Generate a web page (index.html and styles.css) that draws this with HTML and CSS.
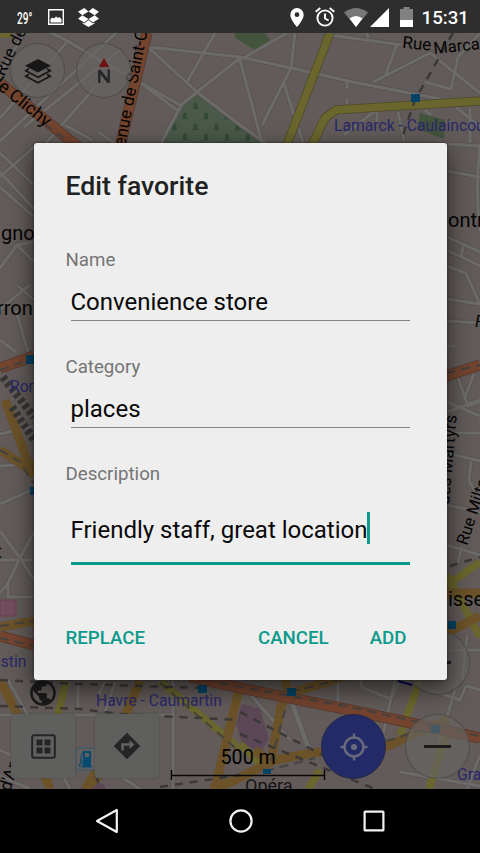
FILE: index.html
```html
<!DOCTYPE html>
<html lang="en">
<head>
<meta charset="utf-8">
<title>Edit favorite</title>
<link rel="stylesheet" href="styles.css">
</head>
<body>
<header class="status">
  <span class="temp">29°</span>
  <svg class="s-image" width="16" height="16" viewBox="0 0 16 16"><path d="M.7.7h14.6v14.6H.7z" fill="none" stroke="#fff" stroke-width="1.4"/><path d="M2.500 13.500v-3l1.500-2 2 1 2-2 2 1.500 1.500-1 2 2.500v3z" fill="#fff"/></svg>
  <svg class="s-drop" width="21" height="19" viewBox="0 0 21 19"><path d="M6.200 0 10.500 3.500 4.300 7.300 0 3.800zM14.800 0 21 3.800 16.700 7.300 10.500 3.500zM4.300 7.300 10.500 11 6.200 14.600 0 10.800zM16.700 7.300 21 10.800 14.800 14.600 10.500 11zM10.500 12 14.800 15.400 16.500 14.400V15.600L10.500 19 4.500 15.600V14.400L6.200 15.400z" fill="#fff"/></svg>
  <span class="spacer"></span>
  <svg class="s-pin" width="14" height="19" viewBox="0 0 14 19"><path fill="#fff" fill-rule="evenodd" d="M7 0a6.700 6.700 0 0 0-6.700 6.700C.3 11.500 7 19 7 19s6.700-7.500 6.700-12.300A6.700 6.700 0 0 0 7 0zm0 4.300a2.400 2.400 0 1 1 0 4.800 2.400 2.400 0 0 1 0-4.800z"/></svg>
  <svg class="s-alarm" width="20" height="20" viewBox="0 0 20 20" fill="none" stroke="#fff" stroke-width="1.900"><circle cx="10" cy="11" r="7.600"/><path d="M10 6.500v5l3.600 2M.7 4.800 5.300 1M19.300 4.800 14.700 1"/></svg>
  <svg class="s-wifi" width="24" height="19" viewBox="0 0 24 19"><path d="M0 4.500Q12-4.500 24 4.500L12 19z" fill="#777"/><path d="M5.500 10.500Q12 5.500 18.500 10.500L12 19z" fill="#fff"/></svg>
  <svg class="s-cell" width="19" height="19" viewBox="0 0 19 19"><path d="M19 0v19H0z" fill="#fff"/></svg>
  <svg class="s-bat" width="13" height="20" viewBox="0 0 13 20"><path d="M3.500 0h6v2H13v11H0V2h3.500z" fill="#818181"/><path d="M0 13h13v7H0z" fill="#fff"/></svg>
  <time class="clock">15:31</time>
</header>

<main class="screen">
  <svg class="map" viewBox="0 33 480 756" width="480" height="756">
    <defs>
      <pattern id="graves" width="21" height="21" patternUnits="userSpaceOnUse" x="185" y="102">
        <path d="M8.500 6V2.500a2 2 0 0 1 4 0V6h1v1.200h-6V6zM-2 16v-3.500a2 2 0 0 1 4 0V16h1v1.200h-6V16zM19 16v-3.500a2 2 0 0 1 4 0V16h1v1.200h-6V16z" fill="#344a37"/>
      </pattern>
      <g id="minor">
        <path d="M0 141 116 33M0 74 24 33M50 33 68 41 112 68 133 77 178 111M68 41 0 118M53 33 180 105M24 127 120 50M65 125 92 140M98 132 140 160M112 68 46 143M148 47 197 92 240 125 290 160M148 47 240 57M181 105 197 92 240 58M187 82 215 33M161 143 182 104 197 92M240 57 291 68 353 82 440 99M240 60 287 33M240 60 262 143M291 68 295 33M291 68 262 125M284 84 303 143M330 35 402 45M397 44 386 74M373 82 430 53M366 33 369 38M347 80v9M347 98v8M344 135 376 110M377 112v10M398 112 404 140M430 53 480 93M458 57 451 89 425 82M480 33 458 57M425 110 431 115M470 108v35M456 107l24 20"/>
        <path d="M0 153 34 185M0 172 34 209M34 242 17 245 0 268M0 187 34 217M17 245 34 262M0 309 30 285M17 285 34 300M16 310 28 352M0 340 16 352M34 147 0 177M0 504 34 489M0 531 20 558 34 580M0 593 8 583 8 597 34 597M8 583 20 558 34 532M0 560H34M0 466 34 464M0 434 34 426"/>
        <path d="M447 144 480 146M447 171 480 177M447 237 480 252M447 250 480 266M461 257 464 243M447 266 466 273 480 305M447 299 480 304M447 321 480 323M447 346h8M458 378l10 28 12-5M474 374l-10 25M480 144q-5 48 0 87M447 402 480 416M447 412 480 400M447 433h33M447 453l33 8M471 461l-2 20 11 19M447 505 480 512M447 545 480 555M457 565l5-18M447 650h33M467 635l-5 45"/>
        <path d="M8 680 70 789M173 681V789M105 681 98 696M115 682 105 712M338 680v23M361 680v7l30 12 9-19M395 680 383 735M290 700 312 760M293 703 310 750M250 694 290 740M400 772 480 786M430 690 460 700 466 686 480 690M458 680 440 740 430 789M480 755 467 789M0 750 28 763M0 776 30 789M80 750 140 789M0 715H173M78 681v30"/>
      </g>
    </defs>
    <rect y="33" width="480" height="756" fill="#625b59"/>
    <path d="M235 33h30l6 8-16 9-20-12zM420 113l25 7-1 19-27-10z" fill="#43543d"/>
    <path d="M197 93 240 125 270 147H160l23-42z" fill="#4a5949"/>
    <path d="M197 93 240 125 270 147H160l23-42z" fill="url(#graves)"/>
    <path d="M0 600h16v16H0z" fill="#704e5c" stroke="#713c58"/>
    <path d="M242 704l18 5 9 30-9 14-18-10-6-20zM86 781l18 3 2 5H80z" fill="#5c4757"/>
    <use href="#minor" class="minor-edge"/>
    <use href="#minor" class="minor"/>

    <path class="edge" d="M330 33 286 147M311 147l14-29 11-8 30-2 114-7"/>
    <path class="yellow" d="M330 33 286 147M311 147l14-29 11-8 30-2 114-7"/>
    <path class="yellow" d="M0 34h12M446 586l34-24M447 575l33 62M420 680l-20 55M447 730l-18 59M66 681l-8 34M160 681l80 68M320 770l-12 19M240 744l20 20"/>
    <path class="amber" d="M447 593h33M447 633 480 616M0 450l26 17 8 8M5 400l22 60 7 12M0 627l34-6M0 680l30 60 20 49M140 681l-30 70-25 38M85 789l30-28M285 680l3 12-7 14-8 45-2 10 40-8 77-7 60-27M285 695 350 675M254 750l17 12-40 20-20 7M239 690l-24 98"/>
    <path class="edge orange-edge" d="M0 83 78 147M147 33 120 147M0 368 34 356M446 376l34-11M0 636l34 9M190 677 240 688 355 711 480 738"/>
    <path class="orange" d="M0 83 78 147M147 33 120 147M0 368 34 356M446 376l34-11M0 636l34 9M190 677 240 688 355 711 480 738"/>
    <path class="rail" d="M45 124 75 147M0 370 34 358M447 373l33-8M0 626l34-5M0 638l34 8M0 450l20 12 14 22M220 683 355 708 480 736M290 692 350 677M386 741 430 728M285 710l-14 51M265 771l50-13M160 683l80 69"/>
    <path class="railway" d="M0 706 80 709 120 714 240 720M0 680 80 684 205 688M160 787 240 775M240 712 330 759M240 734 375 789M453 33 415 100 402 138M450 566l30-9M96 775l4 14"/>
    <path d="M3 377 34 417M12 407 34 440" class="tracks"/>
    <path d="M398 681l14 4" stroke="#05055b" stroke-width="2"/>
    <path d="M411 94h9v8h-9zM26 355h9v9h-9zM30 487h9v8h-9zM198 685h9v8h-9zM287 688h9v8h-9zM448 621h8v8h-8zM263 769h8v5h-8zM431 725h9v8h-9z" fill="#064466"/>

    <g class="street">
      <text transform="translate(4 77) rotate(-64)" font-size="17">Rue de</text>
      <text transform="translate(-11 82) rotate(39)" font-size="18">de Clichy</text>
      <text transform="translate(125 147) rotate(-79)" font-size="17">enue de Saint-O</text>
      <text transform="translate(402 48) rotate(5)" font-size="17">Rue</text>
      <text transform="translate(434 54) rotate(-6)" font-size="16.500">Marcadet</text>
      <text transform="translate(449 505) rotate(-85)" font-size="17">des Martyrs</text>
      <text transform="translate(467 546) rotate(-72)" font-size="16.500">Rue Milton</text>
      <text transform="translate(10 792) rotate(-72)" font-size="17">d'Ams</text>
      <text x="475" y="327" font-size="17" font-style="italic">R</text>
      <text x="1" y="240" font-size="20">gnolles</text>
      <text x="-3" y="315" font-size="20">rron</text>
      <text x="448" y="227" font-size="20">ontmartre</text>
      <text x="448" y="606" font-size="20">issement</text>
      <text x="-4" y="558" font-size="18">t</text>
      <text x="245" y="792" font-size="18" fill="#151515">Opéra</text>
    </g>
    <g class="metro" font-size="15.700">
      <text x="334" y="131">Lamarck - Caulaincourt</text>
      <text x="10" y="392">Rome</text>
      <text x="-8" y="667">ustin</text>
      <text x="96" y="706">Havre - Caumartin</text>
      <text x="457" y="780">Grands</text>
    </g>
    <rect x="76" y="748" width="20" height="22" rx="3" fill="#625f5e" stroke="#365b70"/>
    <path d="M83 751h8v15h1v1.500h-10V766h1zM85 753v4h4v-4z" fill="#064b70" fill-rule="evenodd"/>
    <path d="M83 752q-2 3-2 7t-2 7q2 2 3-1v-5" fill="none" stroke="#064b70"/>
    <text x="220.500" y="764" font-size="19.700">500 m</text>
    <path d="M171.500 770v10M324.500 770v10M171 775.500h154" fill="none" stroke="#080808" stroke-width="1.500"/>
  </svg>

  <div class="controls top">
    <div class="round small"><svg width="28" height="28" viewBox="0 0 28 28"><path d="M14 2 27 8.700 14 15.500 1 8.700z" fill="#171717"/><path d="M5 11.800 1.800 13.800 14 20.300 26.200 13.800 23 11.800M5 17.300 1.800 19.300 14 25.700 26.200 19.300 23 17.300" fill="none" stroke="#171717" stroke-width="1.700"/></svg></div>
    <div class="round small compass"><svg width="16" height="26" viewBox="0 0 16 26"><path d="M8 0 13.300 9H2.700z" fill="#701313"/><path d="M3.300 25V12.300L12.700 23.500M12.700 11.500V24.500L3.300 13" fill="none" stroke="#272727" stroke-width="2.400" stroke-linejoin="bevel"/></svg></div>
  </div>
  <div class="round zoom-in"><i class="bar"></i></div>
  <svg class="globe" width="28" height="28" viewBox="0 0 24 24"><path fill="#1b1b1b" d="M12 1C5.900 1 1 5.900 1 12s4.900 11 11 11 11-4.900 11-11S18.100 1 12 1zm-1.100 19.700c-4.300-.5-7.700-4.200-7.700-8.700 0-.7.100-1.300.2-2l5.300 5.300v1.100c0 1.200 1 2.200 2.200 2.200v2.100zm7.600-2.800c-.3-.9-1.100-1.500-2.100-1.500h-1.100v-3.300c0-.6-.5-1.100-1.100-1.100H7.600V9.800h2.200c.6 0 1.100-.5 1.100-1.100V6.500h2.200c1.200 0 2.200-1 2.200-2.200v-.5c3.200 1.300 5.500 4.500 5.500 8.200 0 2.300-.9 4.400-2.300 5.900z"/></svg>
  <div class="controls bottom">
    <div class="tile"><svg width="25" height="25" viewBox="0 0 25 25"><rect x="1.200" y="1.200" width="22.600" height="22.600" rx="2" fill="none" stroke="#242424" stroke-width="2"/><path d="M5.500 5.500h6v6h-6zM13.500 5.500h6v6h-6zM5.500 13.500h6v6h-6zM13.500 13.500h6v6h-6z" fill="#242424"/></svg></div>
    <div class="tile"><svg width="28" height="28" viewBox="0 0 28 28"><path d="M14 .8 27.200 14 14 27.200.8 14z" fill="#242424"/><path d="M9.500 18.500v-6h8" fill="none" stroke="#626262" stroke-width="2.600"/><path d="M16.500 8 21.500 12.500 16.500 17z" fill="#626262"/></svg></div>
    <span class="spacer"></span>
    <div class="round locate"><svg width="28" height="28" viewBox="0 0 28 28" fill="none" stroke="#696b7c" stroke-width="2.400"><circle cx="14" cy="14" r="9.500"/><circle cx="14" cy="14" r="3" fill="#696b7c" stroke="none"/><path d="M14 .5v5M14 22.500v5M.5 14h5M22.500 14h5"/></svg></div>
    <div class="round zoom-out"><i class="bar"></i></div>
  </div>

  <section class="dialog">
    <h1>Edit favorite</h1>
    <label>Name</label>
    <div class="field">Convenience store</div>
    <label>Category</label>
    <div class="field">places</div>
    <label>Description</label>
    <div class="field active">Friendly staff, great location<i class="caret"></i></div>
    <div class="actions">
      <button>REPLACE</button>
      <span class="spacer"></span>
      <button class="cancel">CANCEL</button>
      <button>ADD</button>
    </div>
  </section>
</main>

<nav class="nav">
  <svg width="24" height="26" viewBox="0 0 24 26"><path d="M21.800 2v22L2 13z" fill="none" stroke="#f2f2f2" stroke-width="2.200" stroke-linejoin="round"/></svg>
  <svg width="24" height="24" viewBox="0 0 24 24"><circle cx="12" cy="12" r="10.600" fill="none" stroke="#f2f2f2" stroke-width="2.200"/></svg>
  <svg width="22" height="22" viewBox="0 0 22 22"><rect x="1.600" y="1.600" width="18.800" height="18.800" rx=".5" fill="none" stroke="#f2f2f2" stroke-width="2.200"/></svg>
</nav>
</body>
</html>
```
FILE: styles.css
```css
* { box-sizing: border-box; }

body {
  margin: 0;
  width: 480px;
  height: 853px;
  display: flex;
  flex-direction: column;
  overflow: hidden;
  background: #000;
  font-family: Roboto, "Liberation Sans", sans-serif;
}

svg { display: block; flex: none; }
.spacer { flex: 1; }

/* Status bar */
.status {
  height: 33px;
  flex: none;
  display: flex;
  align-items: center;
  padding: 1px 11px 0 17px;
  background: #2e2e2e;
  color: #fff;
}
.temp {
  width: 31px;
  padding-top: 2px;
  font-size: 16px;
  font-weight: 500;
  white-space: nowrap;
  transform: scaleX(.63);
  transform-origin: left;
}
.s-drop { margin-left: 14px; }
.s-alarm { margin-left: 11px; }
.s-wifi { margin-left: 9px; }
.s-cell { margin-left: 2px; }
.s-bat { margin-left: 11px; }
.clock { margin-left: 9px; padding-top: 2px; font-size: 18.7px; font-weight: 500; line-height: 20px; }

/* Map */
.screen {
  position: relative;
  height: 756px;
  flex: none;
  display: flex;
  justify-content: center;
  align-items: flex-start;
  overflow: hidden;
}
.map { position: absolute; inset: 0; }
.map path { stroke-linejoin: round; }
.minor-edge { fill: none; stroke: #575351; stroke-width: 4.4; }
.minor { fill: none; stroke: #6d6b6a; stroke-width: 3; }
.edge { fill: none; stroke: #4d4925; stroke-width: 9; }
.yellow { fill: none; stroke: #6a662d; stroke-width: 7.5; }
.amber { fill: none; stroke: #6b5228; stroke-width: 9; }
.edge.orange-edge { stroke: #56382c; stroke-width: 11; }
.orange { fill: none; stroke: #74442f; stroke-width: 9.5; }
.rail { fill: none; stroke: #454340; stroke-width: 2; stroke-dasharray: 9 6; }
.railway { fill: none; stroke: #3b3938; stroke-width: 2.5; stroke-dasharray: 8 7; }
.tracks { fill: none; stroke: #383635; stroke-width: 8; stroke-dasharray: 4 3; }
.street { fill: #050505; }
.metro { fill: #29276a; }

/* Map controls */
.controls { position: absolute; left: 0; right: 0; display: flex; }
.top { top: 10px; padding-left: 10px; gap: 11px; }
.bottom { top: 681px; padding: 0 10px 0 11px; }
.round {
  width: 65px;
  height: 65px;
  border-radius: 50%;
  display: flex;
  justify-content: center;
  align-items: center;
  background: rgba(101, 101, 99, .65);
  border: 1px solid rgba(60, 58, 56, .5);
}
.small { width: 55px; height: 55px; }
.tile {
  width: 64px;
  height: 64px;
  margin-right: 20px;
  border-radius: 3px;
  display: flex;
  justify-content: center;
  align-items: center;
  background: #5f5f5e;
  box-shadow: 0 0 2px #454342;
}
.locate { background: #222a68; border-color: #252846; margin-right: 19px; }
.bar { width: 27px; height: 3px; background: #1c1c1c; }
.zoom-in { position: absolute; left: 405px; top: 597px; }
.globe { position: absolute; left: 29px; top: 646px; }

/* Dialog */
.dialog {
  position: relative;
  width: 413px;
  height: 537px;
  margin-top: 110px;
  padding: 26px 37px 0 32px;
  display: flex;
  flex-direction: column;
  border-radius: 3px;
  background: #eee;
  box-shadow: 0 8px 22px 3px rgba(0, 0, 0, .5), 0 0 3px rgba(0, 0, 0, .5);
}
h1 {
  margin: 0 0 44px;
  font-size: 26.6px;
  line-height: 34px;
  font-weight: 500;
  color: #212121;
}
label { font-size: 18.7px; line-height: 26px; color: #757575; }
.field {
  height: 48px;
  margin: 0 0 33px 5px;
  padding-top: 14px;
  font-size: 24px;
  line-height: 30px;
  color: #090909;
  white-space: nowrap;
  border-bottom: 1px solid #858585;
}
.active {
  height: 78px;
  display: flex;
  padding-top: 28px;
  margin-bottom: 59px;
  border-bottom: 3px solid #0b9a8b;
}
.caret { width: 3px; height: 32px; margin: -3px 0 0 -1px; background: #0b9a8b; }
.actions { display: flex; padding-right: 3px; }
button {
  margin: 0;
  padding: 0;
  border: 0;
  background: none;
  font: 500 18.7px/28px Roboto, "Liberation Sans", sans-serif;
  color: #0b9a8b;
}
.cancel { margin-right: 41px; }

/* Navigation bar */
.nav {
  height: 64px;
  flex: none;
  display: flex;
  justify-content: space-between;
  align-items: center;
  padding: 0 95px;
  background: #000;
}
```
